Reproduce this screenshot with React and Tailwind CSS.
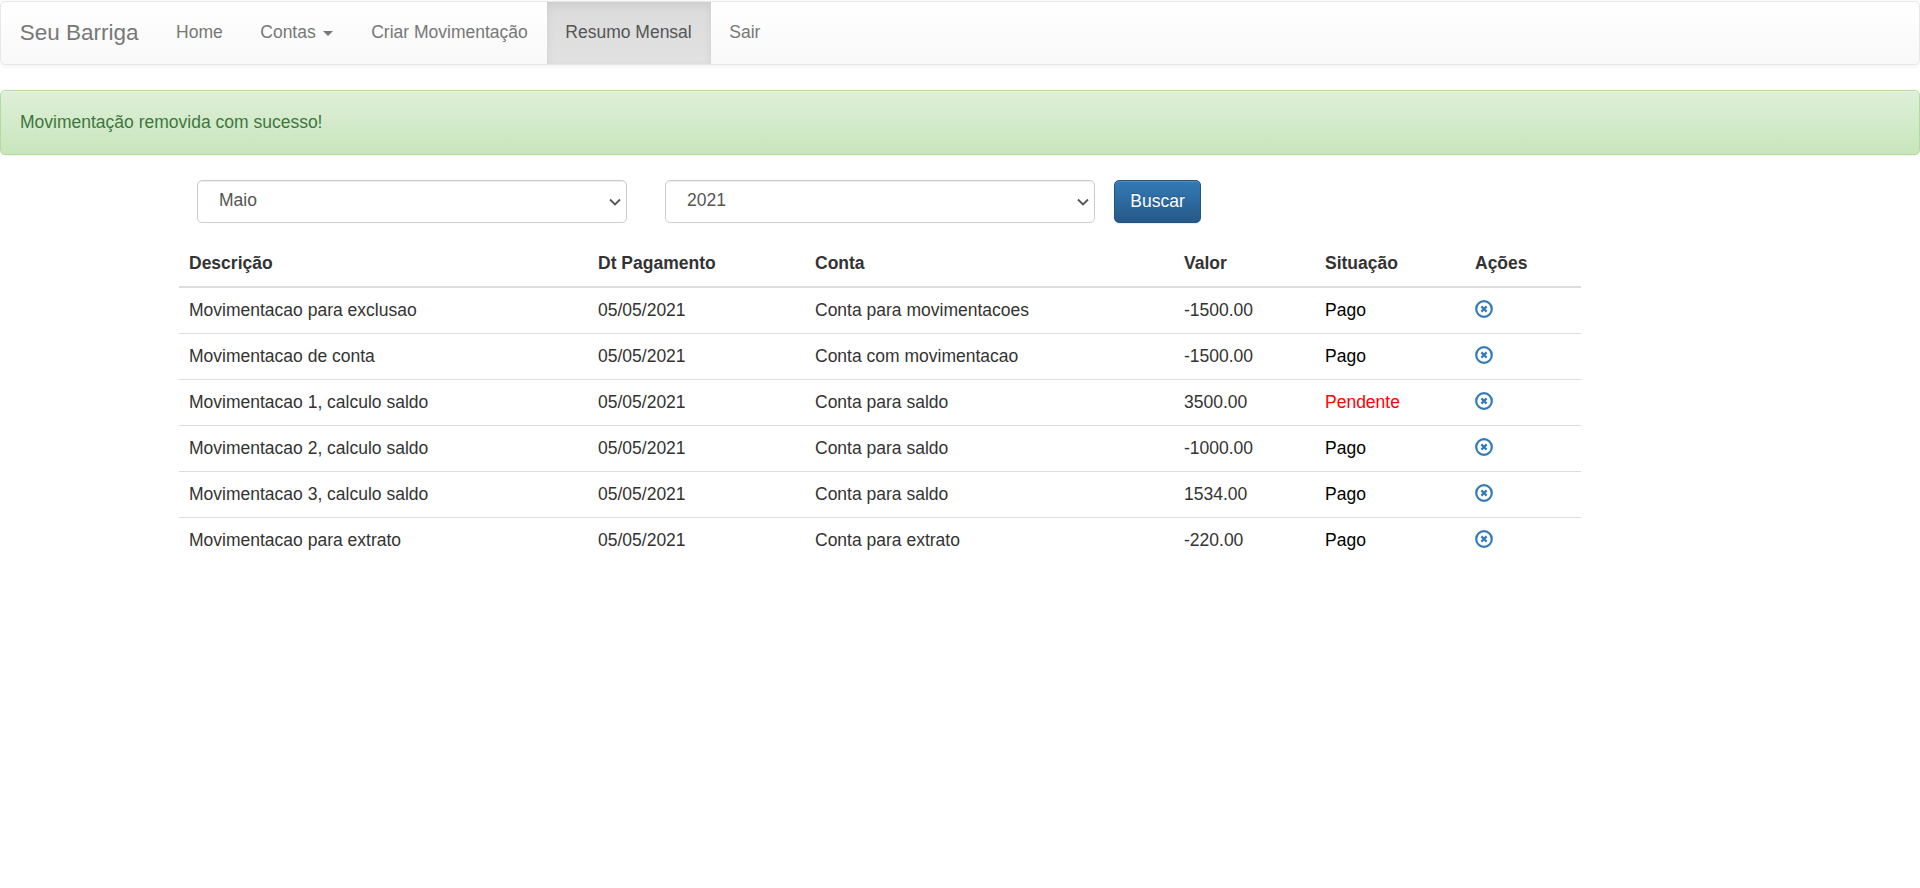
const rows = [
  ['Movimentacao para exclusao', '05/05/2021', 'Conta para movimentacoes', '-1500.00', 'Pago'],
  ['Movimentacao de conta', '05/05/2021', 'Conta com movimentacao', '-1500.00', 'Pago'],
  ['Movimentacao 1, calculo saldo', '05/05/2021', 'Conta para saldo', '3500.00', 'Pendente'],
  ['Movimentacao 2, calculo saldo', '05/05/2021', 'Conta para saldo', '-1000.00', 'Pago'],
  ['Movimentacao 3, calculo saldo', '05/05/2021', 'Conta para saldo', '1534.00', 'Pago'],
  ['Movimentacao para extrato', '05/05/2021', 'Conta para extrato', '-220.00', 'Pago'],
]

const links = ['Home', 'Contas', 'Criar Movimentação', 'Resumo Mensal', 'Sair']

function RemoveIcon() {
  return (
    <svg width="18" height="18" viewBox="0 0 18 18" fill="none" className="block mb-[3px]">
      <circle cx="9" cy="9" r="7.8" stroke="#337ab7" strokeWidth="2.2" />
      <path d="M6.4 6.4l5.2 5.2M11.6 6.4l-5.2 5.2" stroke="#337ab7" strokeWidth="2.2" />
    </svg>
  )
}

function FilterSelect({ value }) {
  return (
    <div className="relative w-[430px] h-[43px]">
      <select
        defaultValue={value}
        className="appearance-none w-full h-full pl-[21px] pr-[30px] pb-[2px] text-[17.5px] text-[#555] bg-white border border-[#ccc] rounded-[5px] shadow-[inset_0_1px_1px_rgba(0,0,0,0.075)]"
      >
        <option>{value}</option>
      </select>
      {/* chevron */}
      <svg width="12" height="8" viewBox="0 0 12 8" fill="none" className="absolute right-[6px] top-[18px] pointer-events-none">
        <path d="M1 1.5l5 5 5-5" stroke="#555" strokeWidth="1.8" />
      </svg>
    </div>
  )
}

export default function App() {
  return (
    <div className="min-h-[888px] bg-white text-[17.5px] leading-[25px] text-[#333] font-['Liberation_Sans',Arial,sans-serif]">
      {/* Navbar */}
      <nav className="mt-px h-[64px] flex border border-[#e7e7e7] rounded-[5px] bg-gradient-to-b from-white to-[#f8f8f8] shadow-[inset_0_1px_0_rgba(255,255,255,0.15),0_1px_5px_rgba(0,0,0,0.075)]">
        <a className="px-[18.75px] flex items-center text-[22.5px] text-[#777] pb-[2px]">Seu Barriga</a>
        {links.map((link) => (
          <a
            key={link}
            className={
              link === 'Resumo Mensal'
                ? 'px-[18.75px] pb-[2px] flex items-center text-[#555] bg-gradient-to-b from-[#dbdbdb] to-[#e2e2e2] shadow-[inset_0_3px_9px_rgba(0,0,0,0.075)]'
                : 'px-[18.75px] pb-[2px] flex items-center text-[#777]'
            }
          >
            {link}
            {link === 'Contas' && (
              <span className="ml-[7px] mr-px mt-[2px] border-x-[5px] border-t-[5px] border-x-transparent border-t-[#777]" />
            )}
          </a>
        ))}
      </nav>

      {/* Alert */}
      <div className="mt-[25px] h-[65px] px-[19px] flex items-center border border-[#b2dba1] rounded-[5px] text-[#3c763d] bg-gradient-to-b from-[#dff0d8] to-[#c8e5bc] [text-shadow:0_1px_0_rgba(255,255,255,0.2)] shadow-[inset_0_1px_0_rgba(255,255,255,0.25),0_1px_2px_rgba(0,0,0,0.05)]">
        Movimentação removida com sucesso!
      </div>

      {/* Filters */}
      <div className="mt-[25px] ml-[197px] flex items-center">
        <FilterSelect value="Maio" />
        <div className="ml-[38px]">
          <FilterSelect value="2021" />
        </div>
        <button className="ml-[19px] w-[87px] h-[43px] text-[17.5px] text-white border border-[#245580] rounded-[5px] bg-gradient-to-b from-[#337ab7] to-[#265a88] [text-shadow:0_-1px_0_rgba(0,0,0,0.2)] shadow-[inset_0_1px_0_rgba(255,255,255,0.15),0_1px_1px_rgba(0,0,0,0.075)]">
          Buscar
        </button>
      </div>

      {/* Table */}
      <table className="mt-[16px] ml-[179px] w-[1402px] table-fixed border-collapse">
        <thead>
          <tr className="h-[48px] border-b-2 border-[#ddd] text-left">
            <th className="w-[409px] px-[10px] pt-[2px] font-bold">Descrição</th>
            <th className="w-[217px] px-[10px] pt-[2px] font-bold">Dt Pagamento</th>
            <th className="w-[369px] px-[10px] pt-[2px] font-bold">Conta</th>
            <th className="w-[141px] px-[10px] pt-[2px] font-bold">Valor</th>
            <th className="w-[150px] px-[10px] pt-[2px] font-bold">Situação</th>
            <th className="px-[10px] pt-[2px] font-bold">Ações</th>
          </tr>
        </thead>
        <tbody>
          {rows.map((row, i) => (
            <tr key={i} className="h-[46px] border-b border-[#ddd] last:border-b-0">
              <td className="px-[10px]">{row[0]}</td>
              <td className="px-[10px]">{row[1]}</td>
              <td className="px-[10px]">{row[2]}</td>
              <td className="px-[10px]">{row[3]}</td>
              <td className={row[4] === 'Pendente' ? 'px-[10px] text-[#ff0000]' : 'px-[10px] text-black'}>{row[4]}</td>
              <td className="px-[10px]">
                <RemoveIcon />
              </td>
            </tr>
          ))}
        </tbody>
      </table>
    </div>
  )
}
